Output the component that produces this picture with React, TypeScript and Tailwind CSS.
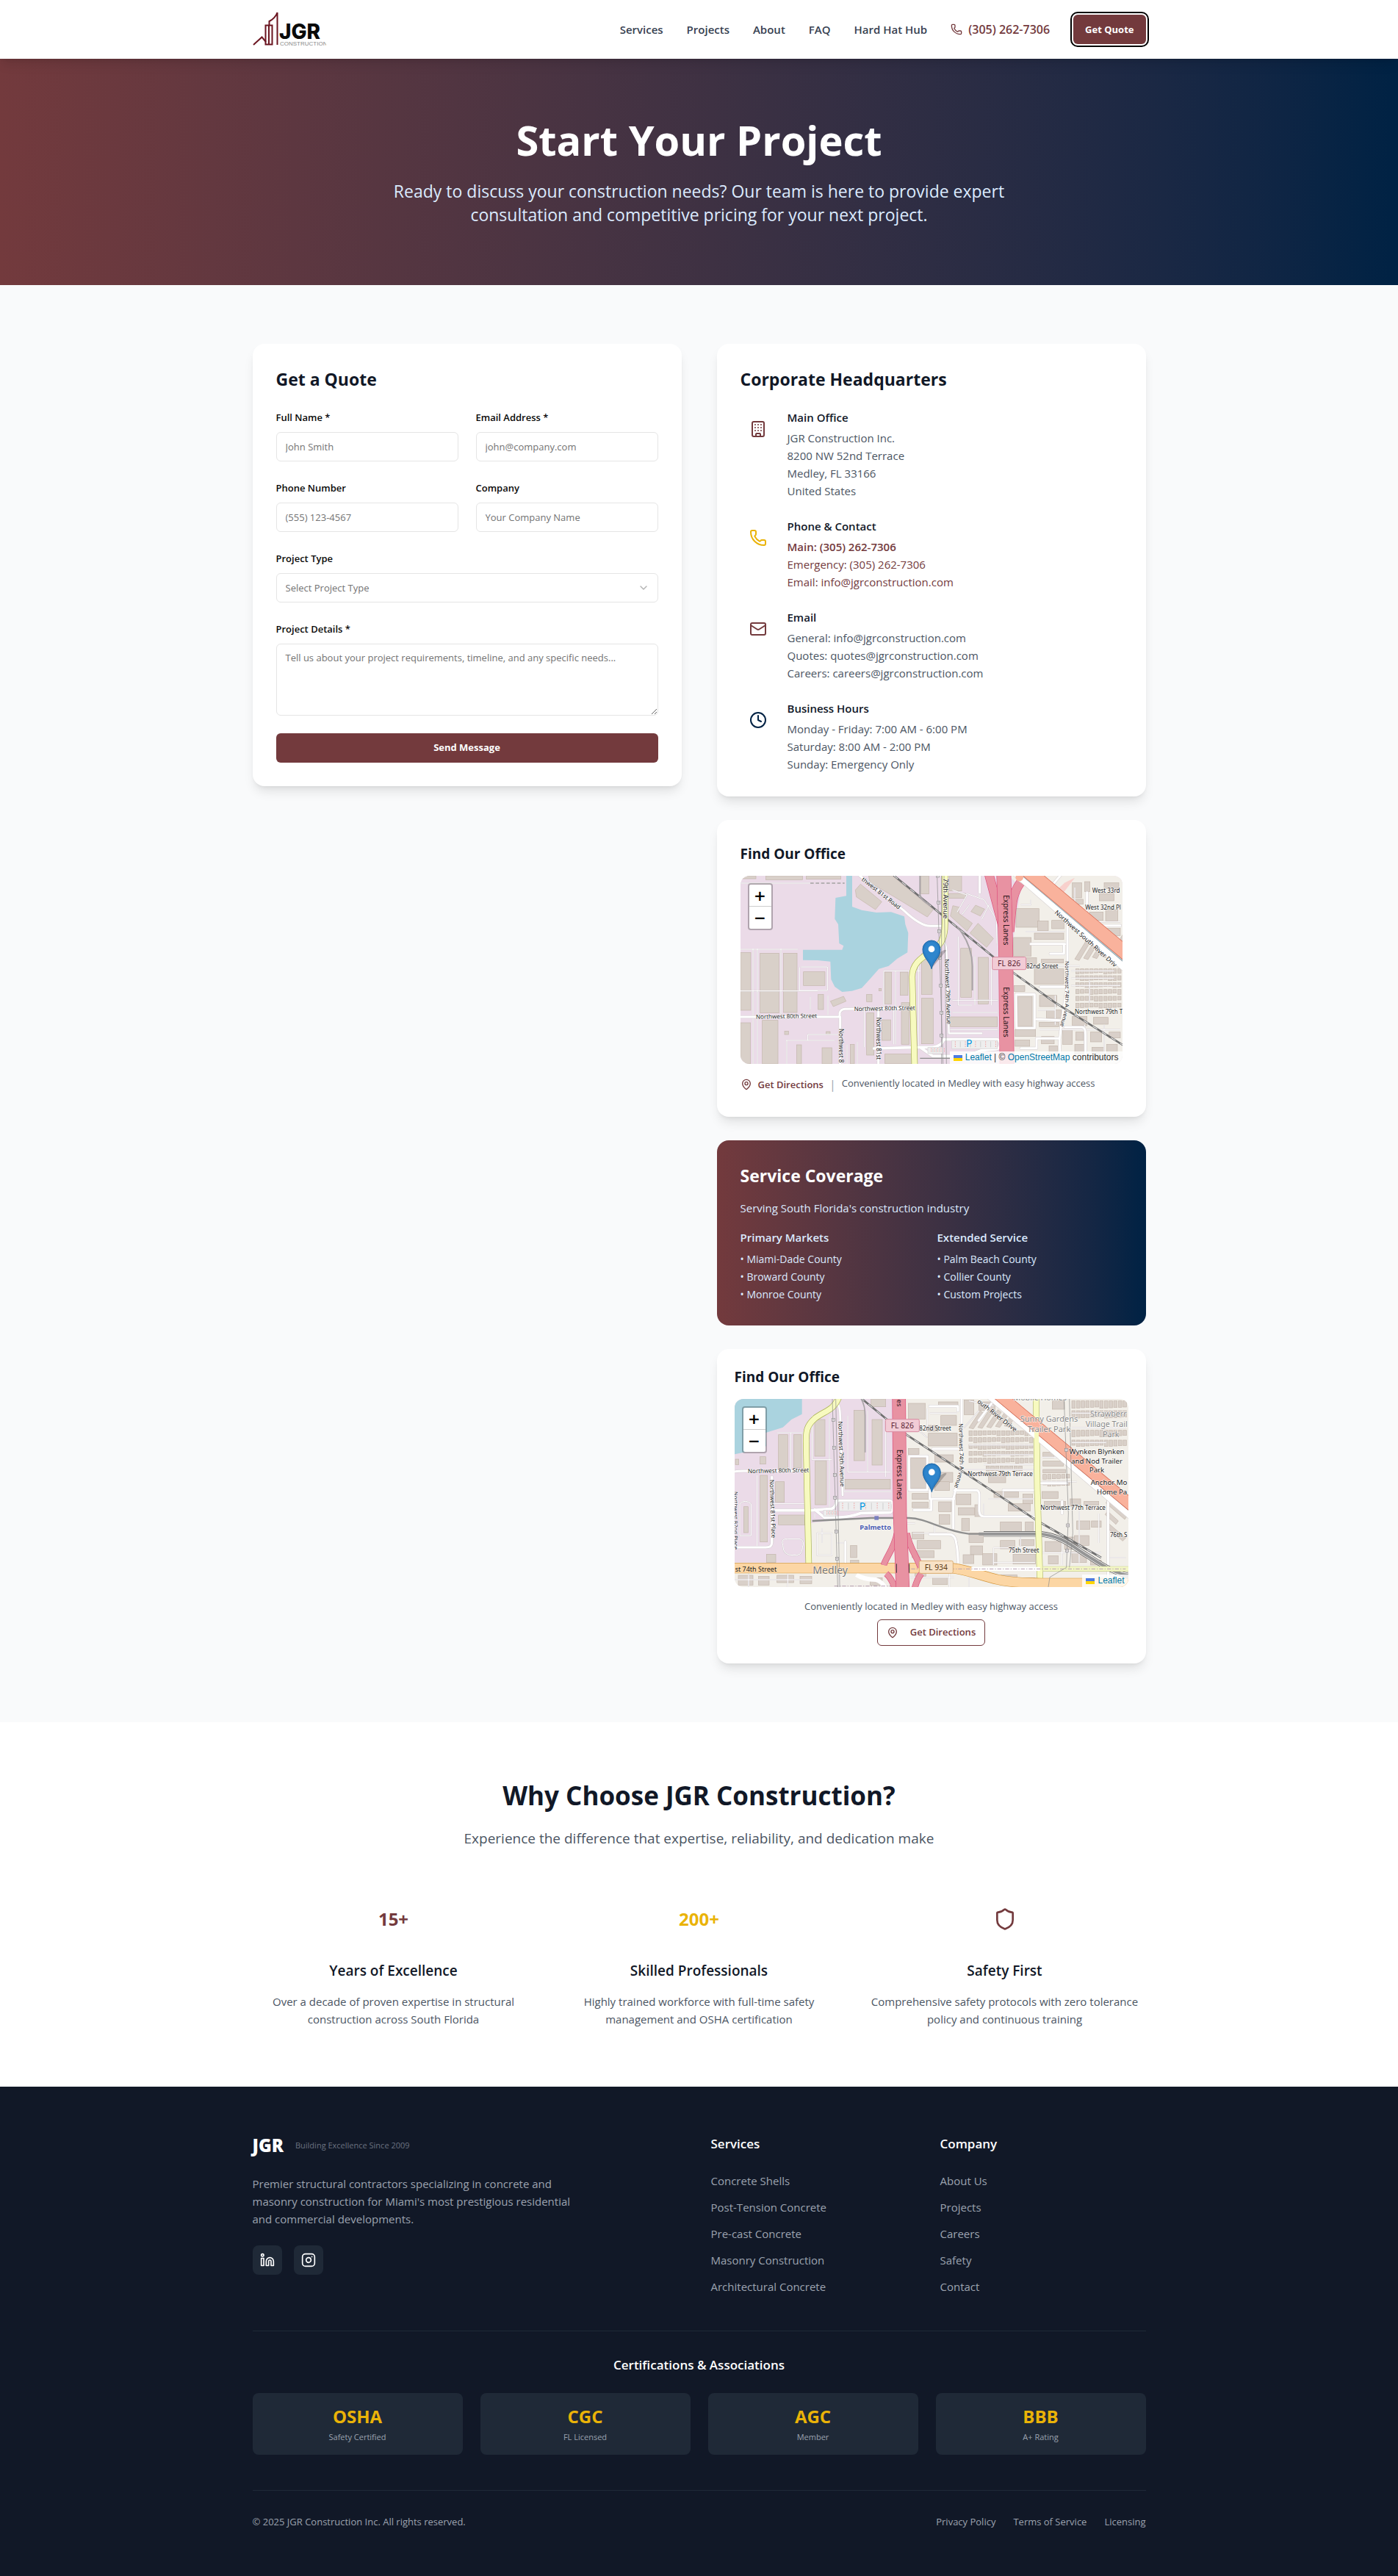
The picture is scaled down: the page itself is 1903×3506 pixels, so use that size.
import React from "react";
import {
  Building,
  ChevronDown,
  Clock,
  Instagram,
  Linkedin,
  Mail,
  MapPin,
  Phone,
  Shield,
} from "lucide-react";

type Box = [number, number, number, number];
type Label = { x: number; y: number; t: string; r?: number; s?: number; fill?: string; bold?: boolean; plain?: boolean; anchor?: "start" | "middle" };

function Boxes({ items }: { items: Box[] }) {
  return (
    <g fill="#d9d0c9" stroke="#c4b6ab" strokeWidth="2">
      {items.map(([x, y, w, h], i) => (
        <rect key={i} x={x} y={y} width={w} height={h} />
      ))}
    </g>
  );
}

function Roads({ d, w = 9 }: { d: string; w?: number }) {
  return (
    <g fill="none" strokeLinecap="round" strokeLinejoin="round">
      <path d={d} stroke="#d3cdd0" strokeWidth={w + 3} />
      <path d={d} stroke="#ffffff" strokeWidth={w} />
    </g>
  );
}

function Lanes({ d }: { d: string }) {
  return (
    <g fill="none" strokeLinejoin="round">
      <path d={d} stroke="#cfc8cc" strokeWidth="5" />
      <path d={d} stroke="#ffffff" strokeWidth="3" />
    </g>
  );
}

function Rail({ d }: { d: string }) {
  return (
    <g fill="none">
      <path d={d} stroke="#6f6f6f" strokeWidth="8" />
      <path d={d} stroke="#ffffff" strokeWidth="3" strokeDasharray="22 22" />
    </g>
  );
}

function Casing({ d, w, fill, edge }: { d: string; w: number; fill: string; edge: string }) {
  return (
    <g fill="none">
      <path d={d} stroke={edge} strokeWidth={w + 4} />
      <path d={d} stroke={fill} strokeWidth={w} />
    </g>
  );
}

function PowerLine({ d, poles }: { d: string; poles: [number, number][] }) {
  return (
    <g fill="none" stroke="#8a8a8a" strokeWidth="2">
      <path d={d} />
      {poles.map(([x, y], i) => (
        <g key={i}>
          <rect x={x - 6} y={y - 6} width="12" height="12" fill="#f4eef2" />
          <circle cx={x} cy={y} r="2" />
        </g>
      ))}
    </g>
  );
}

function Labels({ items }: { items: Label[] }) {
  return (
    <g fontFamily="'Noto Sans', sans-serif" stroke="#ffffff" strokeOpacity="0.75" strokeLinejoin="round" paintOrder="stroke">
      {items.map((l, i) => (
        <text
          key={i}
          x={l.x}
          y={l.y}
          fontSize={l.s ?? 24}
          fill={l.fill ?? "#222222"}
          strokeWidth={l.plain ? 0 : 4}
          fontWeight={l.bold ? 700 : 400}
          textAnchor={l.anchor ?? "start"}
          transform={l.r ? `rotate(${l.r} ${l.x} ${l.y})` : undefined}
        >
          {l.t}
        </text>
      ))}
    </g>
  );
}

function RoadShield({ x, y, text, fill, edge, color }: { x: number; y: number; text: string; fill: string; edge: string; color: string }) {
  return (
    <g>
      <rect x={x} y={y} width="138" height="51" rx="6" fill={fill} stroke={edge} strokeWidth="3" />
      <text x={x + 69} y={y + 37} textAnchor="middle" fontSize="31" fontFamily="'Noto Sans', sans-serif" fill={color}>
        {text}
      </text>
    </g>
  );
}

function Pin({ x, y }: { x: number; y: number }) {
  return (
    <g transform={`translate(${x} ${y})`}>
      <path d="M2 -4 L50 -62 Q70 -82 50 -76 L20 -60Z" fill="#000000" opacity="0.22" />
      <path d="M0 0 C-6 -30 -36 -46 -36 -80 A36 36 0 0 1 36 -80 C36 -46 6 -30 0 0Z" fill="#2a7fc6" stroke="#1f66a5" strokeWidth="3" />
      <path d="M0 -18 C-6 -40 -29 -54 -29 -80 A29 29 0 0 1 29 -80 C29 -54 6 -40 0 -18Z" fill="#2f86cd" />
      <circle cx="0" cy="-81" r="13" fill="#ffffff" />
    </g>
  );
}

function Parking({ x, y, w, h }: { x: number; y: number; w: number; h: number }) {
  const ticks = Array.from({ length: 9 }, (_, i) => x + 14 + (i * w) / 9);
  return (
    <g>
      <rect x={x} y={y} width={w} height={h} fill="#eeeeee" stroke="#d8d4d6" strokeWidth="2" />
      {ticks.map((tx, i) => (
        <path key={i} d={`M${tx} ${y + 4}V${y + h - 6}`} stroke={i % 2 ? "#cfcfcf" : "#f0a5a5"} strokeWidth="3" strokeDasharray={i % 2 ? "none" : "5 4"} />
      ))}
    </g>
  );
}

function Homes({ x, y, cols, rows, w = 14, h = 20, gx = 19, gy = 28 }: { x: number; y: number; cols: number; rows: number; w?: number; h?: number; gx?: number; gy?: number }) {
  const cells: Box[] = [];
  for (let r = 0; r < rows; r++) for (let c = 0; c < cols; c++) cells.push([x + c * gx, y + r * gy, w, h - ((c * 7 + r * 5) % 6)]);
  return <Boxes items={cells} />;
}

const westBoxes: Box[] = [
  [15, 325, 42, 236], [95, 328, 77, 244], [190, 328, 56, 242], [272, 404, 88, 56], [15, 612, 41, 168], [104, 602, 64, 178],
  [604, 405, 28, 130], [667, 405, 32, 95], [672, 530, 32, 170], [754, 330, 44, 166], [754, 512, 48, 186], [914, 308, 44, 200],
  [985, 345, 42, 190], [872, 588, 192, 40], [530, 572, 30, 172], [592, 600, 36, 84], [604, 740, 112, 38], [348, 714, 40, 66],
  [244, 702, 20, 78], [463, 700, 17, 80], [332, 496, 22, 62], [530, 496, 22, 30], [195, 646, 16, 14], [365, 648, 16, 14],
  [868, 12, 50, 62], [866, 84, 68, 20], [752, 12, 32, 74], [20, 12, 58, 12], [118, 12, 150, 16], [284, 12, 140, 14], [580, 472, 10, 10],
];

const eastBoxes: Box[] = [
  [1140, 146, 94, 76], [1130, 264, 72, 76], [1215, 246, 120, 26], [1228, 196, 44, 40], [1286, 194, 50, 34], [1215, 392, 120, 62],
  [1150, 346, 74, 24], [1244, 352, 90, 16], [1148, 505, 58, 122], [1132, 460, 44, 24], [1136, 640, 84, 28], [1136, 682, 60, 26],
  [1236, 500, 70, 46], [1264, 560, 60, 34], [1235, 610, 80, 18], [1244, 668, 52, 30], [1275, 706, 34, 46], [1330, 640, 40, 60],
  [1384, 650, 32, 34], [1380, 700, 44, 40], [1444, 650, 46, 40], [1450, 712, 50, 50], [1520, 650, 46, 24], [1510, 700, 44, 60],
  [1370, 40, 38, 62], [1420, 36, 22, 40], [1480, 84, 60, 30], [1440, 160, 56, 34], [1506, 150, 50, 46], [1500, 226, 66, 30],
  [1360, 108, 54, 20], [1500, 40, 60, 24], [1370, 586, 60, 38], [1456, 590, 60, 28],
];

function OfficeMapWest() {
  return (
    <svg className="block h-full w-full" viewBox="15 12 1560 768" preserveAspectRatio="xMidYMid slice" role="img" aria-label="Street map around Northwest 79th Avenue, Medley">
      <rect x="0" y="0" width="1600" height="800" fill="#ebdbe8" />
      <path d="M1100 0H1600V800H1130V640L1125 300 1160 60Z" fill="#f2efe9" />
      <path d="M1340 40l40 -20 -50 66 -30 -10z" fill="#f8d0cc" />
      <path d="M447 12H471V138L510 152 570 162 630 160 684 178 688 210 700 245 697 325 655 350 620 380 580 392 545 432 510 470 470 482 430 486 400 465 385 435 382 362 330 357 270 356V314H430L436 298 418 288 414 210 400 188 403 102 447 94Z" fill="#aad3df" />
      <Boxes items={westBoxes} />
      <g fill="#d9d0c9" stroke="#c4b6ab" strokeWidth="2">
        <path d="M484 70L505 46 592 118 566 150 488 98Z" />
        <path d="M538 12H635L802 150 778 180 640 96 544 40Z" />
        <path d="M952 246L985 206 1048 268 1020 304Z" />
        <path d="M872 176L882 134 908 140 906 165 962 206 940 238Z" />
        <path d="M956 158L975 132 1012 148 994 176Z" />
        <path d="M382 524L436 504 446 524 394 546Z" />
      </g>
      <Boxes items={eastBoxes} />
      <Homes x={1384} y={392} cols={10} rows={6} />
      <g fill="#d9d0c9" stroke="#c4b6ab" strokeWidth="2">
        {[0, 1, 2, 3, 4, 5].map((i) => (
          <path key={i} d={`M${1380 + i * 36} ${352 - i * 4}l52 -84 14 10 -48 80z`} />
        ))}
      </g>
      <Lanes d="M15 42H300M66 310V780M84 310V780M180 310V590M256 385V480H370V384H262M15 312H250M600 400H750M648 400V700M600 400V556M742 380V720M904 260V540H960M972 340V540M880 520H1066M880 570H1066M870 640H1066M1040 345V540M520 560V712M640 560V700M300 505V560M372 500V580M15 482H330M200 684H400M204 684V780M290 684V660H420M450 700V780M492 690V780M940 85L1010 110 1060 190 1062 290M880 70L940 90 900 160M990 60V100M920 170L950 130M1030 130L1000 190" />
      <Lanes d="M1225 20L1290 40 1260 90M1200 110V130H1160M1180 240H1340M1350 200H1566M1160 380H1400M1366 460H1566M1440 440V530M1236 640H1566M1366 400H1540M1366 430H1540M1420 620V780M1500 620V780M1230 560H1300M1300 500V620M1380 60V120" />
      <Roads d="M500 10L600 88 680 152 C720 190 760 217 790 217H838" />
      <Roads d="M846 282Q856 290 857 340L866 655H1000" w={7} />
      <Roads d="M15 588H420V572Q424 558 440 556L725 552M422 588V780M578 560V780" />
      <Roads d="M560 717L740 712H800Q836 708 846 680H1062Q1075 682 1075 698 1075 718 1058 720L1000 724Q940 748 880 748H800L752 715" w={11} />
      <Roads d="M1140 496H1216V634H1142ZM1225 598L1320 602M1350 130V450L1325 620 1318 680 1320 740M1200 290H1340M1336 290V330H1280M1240 466H1350M1160 716H1224V676H1316M1340 630H1410Q1424 632 1424 660V760M1430 80V150L1400 190M1490 215H1566M1280 60L1330 0M992 12V80" />
      <Rail d="M640 10L1050 345M1125 405L1300 530 1580 705" />
      <path d="M748 12V90Q752 112 790 132M900 220Q960 290 962 380V480" fill="none" stroke="#a9a4a7" strokeWidth="6" />
      <Casing d="M850 5V205C850 262 838 290 800 318 C745 350 716 375 716 425L726 785" w={22} fill="#f7fabf" edge="#a8b052" />
      <Casing d="M1028 0L1092 240M1158 40C1122 90 1124 130 1114 240" w={34} fill="#e892a2" edge="#dc4f7c" />
      <Casing d="M1090 0L1098 300 1103 790" w={56} fill="#e892a2" edge="#dc4f7c" />
      <path d="M1110 110L1099 300M1076 130L1096 300" stroke="#e892a2" strokeWidth="22" />
      <path d="M1140 0L1600 400" stroke="#d9d4d4" strokeWidth="34" />
      <path d="M1140 0L1600 400" stroke="#ffffff" strokeWidth="30" />
      <path d="M1160 0L1600 374" stroke="#8f9aa0" strokeWidth="14" />
      <path d="M1160 0L1600 372" stroke="#aad3df" strokeWidth="12" />
      <path d="M1188 -8L1610 346" stroke="#d7644c" strokeWidth="58" />
      <path d="M1188 -8L1610 346" stroke="#f9b29c" strokeWidth="54" />
      <circle cx="1154" cy="18" r="16" fill="#f9b29c" />
      <PowerLine d="M818 12L842 780M836 12V780M846 12L856 780" poles={[[820, 12], [824, 121], [826, 238], [829, 346], [833, 460], [836, 571], [836, 664]]} />
      <Parking x={878} y={684} w={186} h={34} />
      <Parking x={780} y={712} w={60} h={26} />
      <path d="M300 42H440" stroke="#b5b0b3" strokeWidth="6" strokeDasharray="14 8" />
      <path d="M748 757H870" stroke="#8c8c8c" strokeWidth="4" />
      <Labels
        items={[
          { x: 508, y: 30, t: "thwest 81st Road", r: 38 },
          { x: 844, y: 22, t: "79th Avenue", r: 90, s: 28 },
          { x: 1088, y: 90, t: "Express Lanes", r: 90, s: 31, fill: "#2a1519", plain: true },
          { x: 1088, y: 466, t: "Express Lanes", r: 90, s: 31, fill: "#2a1519", plain: true },
          { x: 849, y: 352, t: "Northwest 79th Avenue", r: 88, s: 24 },
          { x: 1342, y: 360, t: "Northwest 74th A", r: 90, s: 23 },
          { x: 1338, y: 562, t: "venue", r: 106, s: 23 },
          { x: 416, y: 636, t: "Northwest 8", r: 90 },
          { x: 570, y: 590, t: "Northwest 81st", r: 90 },
          { x: 78, y: 596, t: "Northwest 80th Street", r: -1 },
          { x: 479, y: 564, t: "Northwest 80th Street", r: -1 },
          { x: 1182, y: 390, t: "82nd Street" },
          { x: 1451, y: 82, t: "West 33rd" },
          { x: 1423, y: 151, t: "West 32nd Pl" },
          { x: 1380, y: 575, t: "Northwest 79th T" },
          { x: 1296, y: 164, t: "Northwest South River Driv", r: 42, s: 26 },
          { x: 936, y: 712, t: "P", s: 42, fill: "#0092da" },
        ]}
      />
      <RoadShield x={1043} y={344} text="FL 826" fill="#f2ccd6" edge="#d98aa0" color="#5b1f33" />
      <Pin x={795} y={392} />
    </svg>
  );
}

const plantBoxes: Box[] = [
  [182, 158, 38, 142], [244, 158, 32, 134], [330, 96, 42, 150], [332, 264, 46, 180], [490, 58, 44, 206], [564, 96, 42, 186],
  [453, 340, 186, 40], [107, 324, 30, 272], [170, 350, 36, 84], [182, 486, 108, 40], [40, 452, 18, 106], [133, 646, 38, 34],
  [106, 248, 24, 30], [6, 258, 14, 22], [560, 12, 60, 32], [476, 610, 26, 50], [476, 670, 34, 26],
];

const townBoxes: Box[] = [
  [722, 254, 62, 124], [712, 30, 70, 64], [794, 152, 118, 52], [712, 214, 44, 24], [835, 24, 80, 18], [845, 80, 64, 40],
  [790, 120, 44, 24], [820, 240, 76, 30], [830, 312, 64, 40], [728, 398, 66, 24], [728, 434, 66, 22], [820, 350, 60, 36],
  [728, 556, 48, 28], [748, 590, 96, 34], [728, 632, 90, 28], [836, 432, 52, 40], [838, 484, 44, 40], [908, 400, 60, 44],
  [916, 456, 66, 30], [930, 500, 32, 50], [984, 444, 22, 48], [960, 560, 58, 38], [966, 612, 50, 36], [1016, 644, 58, 46],
  [1088, 514, 86, 46], [1190, 514, 32, 46], [1040, 320, 70, 34], [1062, 390, 100, 24], [1180, 400, 40, 40], [1120, 440, 90, 30],
  [1088, 590, 60, 34], [1166, 586, 60, 24], [1140, 646, 92, 40], [936, 648, 44, 36], [1270, 594, 66, 40], [1284, 652, 40, 34],
  [1350, 576, 44, 50], [1400, 510, 54, 34], [1460, 510, 40, 26], [1380, 636, 60, 44], [1456, 670, 44, 20], [1258, 390, 66, 28],
  [1268, 430, 86, 18], [1372, 420, 44, 30], [1430, 430, 60, 16], [740, 702, 44, 34], [812, 740, 60, 30], [1262, 230, 44, 22],
  [1262, 266, 84, 20], [1262, 300, 92, 14], [1090, 730, 66, 40], [1180, 742, 50, 30], [1000, 24, 66, 34], [940, 16, 40, 60],
  [18, 732, 60, 40], [100, 736, 44, 36], [176, 732, 68, 30], [270, 736, 48, 30], [556, 742, 50, 30], [1300, 20, 50, 34], [1390, 570, 60, 40],
];

function OfficeMapEast() {
  return (
    <svg className="block h-full w-full" viewBox="3 12 1608 768" preserveAspectRatio="xMidYMid slice" role="img" aria-label="Street map around Palmetto Station, Medley">
      <rect x="0" y="0" width="1640" height="800" fill="#f2efe9" />
      <path d="M0 0H650V500H470L310 520V680H0Z" fill="#ebdbe8" />
      <path d="M0 0H278V74L235 96 200 128 130 150 132 205 60 226 0 238Z" fill="#aad3df" />
      <Boxes items={plantBoxes} />
      <Boxes items={townBoxes} />
      <Homes x={960} y={142} cols={14} rows={5} />
      <Homes x={1030} y={286} cols={8} rows={1} />
      <Homes x={1380} y={20} cols={12} rows={2} gy={40} h={30} />
      <Homes x={1380} y={140} cols={12} rows={2} gy={40} h={26} />
      <Homes x={1262} y={320} cols={6} rows={2} />
      <g fill="#d9d0c9" stroke="#c4b6ab" strokeWidth="2">
        {[0, 1, 2, 3, 4].map((i) => (
          <path key={i} d={`M${960 + i * 36} ${130 - i * 2}l46 -70 14 10 -42 64z`} />
        ))}
        <path d="M1526 470l44 40 -10 14 -44 -40zM1526 420l80 70 -10 14 -76 -66zM1530 520l70 60 -12 12 -62 -52z" />
      </g>
      <Lanes d="M176 150H290M232 150V310M300 150V470M390 80V460M320 80V260H400M465 80V310H640M546 60V310M620 96V330M450 300V390H644M160 330V600M95 324V620M24 440V570H70V440Q46 420 24 440M200 610Q190 580 220 584H270Q290 590 280 620 280 655 240 650 200 650 200 610M150 440H290M340 560H400V650H340ZM360 540V600M420 600H452M740 520H650M330 480V500M0 750H320M60 680V780M220 700V780M430 700V780" />
      <Lanes d="M800 40H910M800 70H910M790 130V50M730 120L790 170M960 20L1060 40M940 130L1000 60M960 200H1230M1020 240H1230M1020 280H1230M940 300H1230M1260 250H1350M1260 350H1400M1380 70H1600M1380 130H1600M1380 190H1520M1060 620H1230M1060 680H1230M1060 620V690M1250 640H1500M1340 600V690M1170 560V640M820 520V560M730 560L870 560M1020 440V490M1040 420H1230M1100 380V420M1410 470V680M1490 480V600M1526 660H1600M880 690V780M960 700V780M720 740H900" />
      <Roads d="M0 310Q10 306 40 306H290M155 330V600Q155 618 130 618H0" />
      <Roads d="M420 30Q434 40 434 80L444 405M455 595V680" w={8} />
      <Roads d="M170 467H320L400 460Q415 455 420 428H635Q650 430 650 450 650 475 632 476L520 478Q470 496 420 496H370L330 464" w={11} />
      <Roads d="M715 246H790V384H716ZM800 384V420H900M806 422V466H735M896 470V420L930 290V12M900 385H990Q1002 386 1002 404V470Q1004 492 1020 492H1230M896 470V540M800 565H880Q904 566 908 600 916 640 916 700M1100 384H1230M1250 356H1360M812 216H930M1528 430V770M800 42H915V60M1000 100L1060 20M1340 430V480" />
      <path d="M500 730Q530 750 580 750 610 760 620 790" fill="none" stroke="#ffffff" strokeWidth="18" />
      <Rail d="M515 5L630 100M700 155L960 325 1240 510 1500 660" />
      <path d="M520 12Q536 40 536 80V230" fill="none" stroke="#a9a4a7" strokeWidth="5" />
      <path d="M320 510L560 498H715C790 500 850 550 960 563 H1250C1340 570 1390 620 1440 650 S1540 720 1620 735" fill="none" stroke="#8f8f8f" strokeWidth="7" />
      <path d="M1020 563H1250C1340 570 1390 620 1440 650 S1540 720 1620 735" fill="none" stroke="#444444" strokeWidth="22" />
      <path d="M1020 563H1250C1340 570 1390 620 1440 650 S1540 720 1620 735" fill="none" stroke="#f2f0ee" strokeWidth="18" />
      <path d="M1000 563H1250C1340 570 1390 620 1440 650 S1540 720 1620 735" fill="none" stroke="#959595" strokeWidth="12" />
      <Casing d="M430 0C410 60 370 60 330 92 300 118 294 140 295 190L306 700" w={22} fill="#f7fabf" edge="#a8b052" />
      <Casing d="M1234 0L1239 380 1250 750" w={22} fill="#f7fabf" edge="#b5bb72" />
      <Casing d="M1262 706H1620" w={18} fill="#f3f7c4" edge="#c9cd92" />
      <Casing d="M0 703H890C960 710 1010 735 1080 750 1140 764 1200 762 1250 764H1620" w={38} fill="#fcd6a4" edge="#d3963c" />
      <path d="M970 706H1250" stroke="#ffffff" strokeWidth="16" />
      <path d="M410 776H690V706H1600" fill="none" stroke="#b79fb3" strokeWidth="3" strokeDasharray="16 6 4 6" />
      <Casing d="M666 560C656 620 620 660 612 690M706 560C716 620 750 660 762 700M622 725Q650 750 660 800M766 725Q745 750 735 800" w={22} fill="#e892a2" edge="#dc4f7c" />
      <Casing d="M674 0L678 480 690 800" w={52} fill="#e892a2" edge="#dc4f7c" />
      <path d="M664 685V722M716 685V722" stroke="#333333" strokeWidth="3" />
      <path d="M1020 -20L1640 506" stroke="#d9d4d4" strokeWidth="30" />
      <path d="M1020 -20L1640 506" stroke="#ffffff" strokeWidth="26" />
      <path d="M1034 -22L1640 484" stroke="#8f9aa0" strokeWidth="12" />
      <path d="M1034 -22L1640 483" stroke="#aad3df" strokeWidth="10" />
      <path d="M1064 -20L1640 460" stroke="#d7644c" strokeWidth="48" />
      <path d="M1064 -20L1640 460" stroke="#f9b29c" strokeWidth="44" />
      <path d="M1236 140V210" stroke="#f7fabf" strokeWidth="18" />
      <PowerLine d="M402 12L424 780M416 12L432 780" poles={[[406, 97], [409, 211], [412, 322], [413, 415], [418, 553], [421, 664]]} />
      <PowerLine d="M1348 12L1366 480 1358 700 1290 740 1284 780M1370 12L1384 560 1370 700" poles={[[1357, 220], [1364, 528], [1360, 631]]} />
      <Parking x={430} y={432} w={212} h={38} />
      <Parking x={366} y={466} w={50} h={24} />
      <rect x="574" y="490" width="17" height="16" fill="#7a7fbf" />
      <Labels
        items={[
          { x: 426, y: 104, t: "Northwest 79th Avenue", r: 88 },
          { x: 146, y: 342, t: "Northwest 81st Place", r: 88 },
          { x: 0, y: 390, t: "Northwest 82nd Place", r: 90, s: 23 },
          { x: 57, y: 315, t: "Northwest 80th Street", r: -1 },
          { x: 666, y: 14, t: "es", r: 90, s: 28, fill: "#2a1519", plain: true },
          { x: 665, y: 218, t: "Express Lanes", r: 90, s: 31, fill: "#2a1519", plain: true },
          { x: 757, y: 140, t: "82nd Street" },
          { x: 919, y: 112, t: "Northwest 74th A", r: 89, s: 23 },
          { x: 920, y: 310, t: "venue", r: 108, s: 23 },
          { x: 955, y: 327, t: "Northwest 79th Terrace" },
          { x: 1252, y: 466, t: "Northwest 77th Terrace" },
          { x: 1122, y: 640, t: "75th Street" },
          { x: 1536, y: 576, t: "76th S" },
          { x: 992, y: 26, t: "outh River Drive", r: 38, s: 26 },
          { x: 5, y: 716, t: "st 74th Street", s: 27, plain: true },
          { x: 322, y: 727, t: "Medley", s: 42, fill: "#777777" },
          { x: 514, y: 546, t: "Palmetto", s: 28, fill: "#4a5bb0", bold: true },
          { x: 512, y: 466, t: "P", s: 42, fill: "#0092da" },
          { x: 1250, y: 18, t: "Mobile Homes", s: 32, fill: "#888888", anchor: "middle" },
          { x: 1287, y: 104, t: "Sunny Gardens", s: 33, fill: "#888888", anchor: "middle" },
          { x: 1287, y: 146, t: "Trailer Park", s: 33, fill: "#888888", anchor: "middle" },
          { x: 1455, y: 84, t: "Strawberr", s: 32, fill: "#888888" },
          { x: 1436, y: 126, t: "Village Trail", s: 32, fill: "#888888" },
          { x: 1506, y: 168, t: "Park", s: 32, fill: "#888888" },
          { x: 1482, y: 238, t: "Wynken Blynken", s: 29, anchor: "middle" },
          { x: 1482, y: 275, t: "and Nod Trailer", s: 29, anchor: "middle" },
          { x: 1482, y: 313, t: "Park", s: 29, anchor: "middle" },
          { x: 1457, y: 364, t: "Anchor Mo", s: 29 },
          { x: 1482, y: 402, t: "Home Pa", s: 29 },
        ]}
      />
      <RoadShield x={619} y={95} text="FL 826" fill="#f2ccd6" edge="#d98aa0" color="#5b1f33" />
      <RoadShield x={757} y={673} text="FL 934" fill="#f8e2c6" edge="#dcae73" color="#5c3a14" />
      <Pin x={808} y={392} />
    </svg>
  );
}

function MapFrame({ children, credit }: { children: React.ReactNode; credit?: boolean }) {
  return (
    <div className="relative h-64 overflow-hidden rounded-xl">
      {children}
      <div className="absolute left-[10px] top-[10px] flex w-[34px] flex-col overflow-hidden rounded border-2 border-black/25 bg-white bg-clip-padding font-['DejaVu_Sans'] text-[20px] font-bold leading-[30px] text-black">
        <button type="button" aria-label="Zoom in" className="h-[30px] border-b border-[#cccccc]">
          +
        </button>
        <button type="button" aria-label="Zoom out" className="h-[30px]">
          −
        </button>
      </div>
      <div className="absolute bottom-0 right-0 flex items-center bg-white/80 px-[5px] font-['Liberation_Sans'] text-xs leading-[17px] text-[#333333]">
        <a href="#leaflet" className="flex items-center gap-1 text-[#0078a8]">
          <svg width="12" height="8" viewBox="0 0 12 8" aria-hidden="true">
            <path fill="#4c7be1" d="M0 0h12v4H0z" />
            <path fill="#ffd500" d="M0 4h12v4H0z" />
          </svg>
          Leaflet
        </a>
        {credit && (
          <span className="whitespace-pre">
            {" | © "}
            <a href="#openstreetmap" className="text-[#0078a8]">
              OpenStreetMap
            </a>
            {" contributors"}
          </span>
        )}
      </div>
    </div>
  );
}

function Logo() {
  return (
    <svg width="100" height="48" viewBox="0 0 100 48" role="img" aria-label="JGR Construction">
      <g fill="none" stroke="#6b1520" strokeWidth="2">
        <path d="M1 45L12.500 34.500 18 41" />
        <path d="M17.500 18.500H26.500V44.500H17.500ZM22 18.500V44.500" />
        <path d="M22.500 18V13C27 11 32 6 33.500 1V45" />
      </g>
      <text x="36" y="37" fontFamily="Inter, sans-serif" fontWeight="800" fontSize="28" fill="#0a0a0a">
        JGR
      </text>
      <text x="37" y="46" fontFamily="'Liberation Sans', sans-serif" fontSize="8" fill="#8a8a8a">
        CONSTRUCTION
      </text>
    </svg>
  );
}

function Header() {
  return (
    <header className="relative z-10 bg-white shadow-lg">
      <div className="mx-auto flex h-20 max-w-7xl items-center justify-between px-8">
        <a href="#home">
          <Logo />
        </a>
        <div className="flex items-center gap-8 text-[15px] font-semibold leading-6 text-[#374151]">
          <nav className="flex items-center gap-8">
            {["Services", "Projects", "About", "FAQ", "Hard Hat Hub"].map((t) => (
              <a key={t} href={"#" + t.toLowerCase().replaceAll(" ", "-")}>
                {t}
              </a>
            ))}
          </nav>
          <a href="tel:3052627306" className="flex items-center gap-2 text-base text-[#733a3d]">
            <Phone size={16} />
            (305) 262-7306
          </a>
          <button type="button" className="h-10 rounded-md bg-[#733a3d] px-4 text-[13px] font-bold text-white outline-2 outline-offset-2 outline-black">
            Get Quote
          </button>
        </div>
      </div>
    </header>
  );
}

const fieldClass = "block w-full rounded-md border border-neutral-200 bg-white px-3 py-2 text-[13px] leading-5 text-neutral-900 placeholder:text-neutral-500";

function Field({ id, label, placeholder, type = "text" }: { id: string; label: string; placeholder: string; type?: string }) {
  return (
    <div>
      <label htmlFor={id} className="mb-2 block text-[13px] font-semibold leading-6 text-neutral-950">
        {label}
      </label>
      <input id={id} type={type} placeholder={placeholder} className={fieldClass + " h-10"} />
    </div>
  );
}

function QuoteForm() {
  return (
    <section className="rounded-2xl bg-white p-8 shadow-lg">
      <h2 className="mb-6 text-[23px] font-bold leading-8 text-[#111827]">Get a Quote</h2>
      <form className="space-y-6" onSubmit={(e) => e.preventDefault()}>
        <div className="grid grid-cols-2 gap-6">
          <Field id="name" label="Full Name *" placeholder="John Smith" />
          <Field id="email" label="Email Address *" placeholder="john@company.com" type="email" />
          <Field id="phone" label="Phone Number" placeholder="(555) 123-4567" type="tel" />
          <Field id="company" label="Company" placeholder="Your Company Name" />
        </div>
        <div>
          <label htmlFor="type" className="mb-2 block text-[13px] font-semibold leading-6 text-neutral-950">
            Project Type
          </label>
          <div className="relative">
            <select id="type" defaultValue="" className="block h-10 w-full appearance-none rounded-md border border-neutral-200 bg-white px-3 text-[13px] leading-5 text-neutral-500">
              <option value="">Select Project Type</option>
              <option>Concrete Shell</option>
              <option>Masonry</option>
            </select>
            <ChevronDown size={16} className="pointer-events-none absolute right-3 top-3 opacity-30" />
          </div>
        </div>
        <div>
          <label htmlFor="details" className="mb-2 block text-[13px] font-semibold leading-6 text-neutral-950">
            Project Details *
          </label>
          <textarea id="details" rows={4} placeholder="Tell us about your project requirements, timeline, and any specific needs..." className={fieldClass} />
        </div>
        <button type="submit" className="h-10 w-full rounded-md bg-[#733a3d] text-[13px] font-bold text-white">
          Send Message
        </button>
      </form>
    </section>
  );
}

function ContactItem({ icon, title, children }: { icon: React.ReactNode; title: string; children: React.ReactNode }) {
  return (
    <div className="flex items-start gap-4">
      <div className="mt-1 flex size-12 shrink-0 items-center justify-center">{icon}</div>
      <div className="text-[15px] leading-6 text-[#4b5563]">
        <h3 className="mb-1 font-semibold text-[#111827]">{title}</h3>
        {children}
      </div>
    </div>
  );
}

function Headquarters() {
  return (
    <section className="rounded-2xl bg-white p-8 shadow-lg">
      <h2 className="mb-6 text-[23px] font-bold leading-8 text-[#111827]">Corporate Headquarters</h2>
      <div className="space-y-6">
        <ContactItem icon={<Building size={24} className="text-[#733a3d]" />} title="Main Office">
          <p>JGR Construction Inc.</p>
          <p>8200 NW 52nd Terrace</p>
          <p>Medley, FL 33166</p>
          <p>United States</p>
        </ContactItem>
        <ContactItem icon={<Phone size={24} className="text-[#eab308]" />} title="Phone & Contact">
          <div className="flex flex-col items-start text-[#733a3d]">
            <a href="tel:3052627306" className="font-semibold">
              Main: (305) 262-7306
            </a>
            <a href="tel:3052627306">Emergency: (305) 262-7306</a>
            <a href="mailto:info@jgrconstruction.com">Email: info@jgrconstruction.com</a>
          </div>
        </ContactItem>
        <ContactItem icon={<Mail size={24} className="text-[#733a3d]" />} title="Email">
          <p>General: info@jgrconstruction.com</p>
          <p>Quotes: quotes@jgrconstruction.com</p>
          <p>Careers: careers@jgrconstruction.com</p>
        </ContactItem>
        <ContactItem icon={<Clock size={24} className="text-[#002244]" />} title="Business Hours">
          <p>Monday - Friday: 7:00 AM - 6:00 PM</p>
          <p>Saturday: 8:00 AM - 2:00 PM</p>
          <p>Sunday: Emergency Only</p>
        </ContactItem>
      </div>
    </section>
  );
}

function Markets({ title, items }: { title: string; items: string[] }) {
  return (
    <div className="text-blue-100">
      <h3 className="mb-2 text-[15px] font-semibold leading-6">{title}</h3>
      <ul className="space-y-1 text-[14px] leading-5">
        {items.map((t) => (
          <li key={t}>• {t}</li>
        ))}
      </ul>
    </div>
  );
}

function Reason({ mark, title, text }: { mark: React.ReactNode; title: string; text: string }) {
  return (
    <div className="text-center">
      <div className="mx-auto mb-6 flex size-16 items-center justify-center text-[24px] font-bold">{mark}</div>
      <h3 className="mb-4 text-[19px] font-semibold leading-7 text-[#111827]">{title}</h3>
      <p className="text-[15px] leading-6 text-[#4b5563]">{text}</p>
    </div>
  );
}

function FooterLinks({ title, items }: { title: string; items: string[] }) {
  return (
    <div>
      <h3 className="mb-6 text-[17px] font-semibold leading-7 text-white">{title}</h3>
      <ul className="space-y-3 text-[15px] leading-6">
        {items.map((t) => (
          <li key={t}>
            <a href="#footer">{t}</a>
          </li>
        ))}
      </ul>
    </div>
  );
}

function Footer() {
  return (
    <footer id="footer" className="bg-[#111827] text-[#9ca3af]">
      <div className="mx-auto max-w-7xl px-8 py-16">
        <div className="mb-12 grid grid-cols-4 gap-8">
          <div className="col-span-2">
            <div className="mb-6 flex items-center gap-4">
              <span className="text-[24px] font-extrabold leading-8 text-white">JGR</span>
              <span className="text-[11px] leading-4 text-[#6b7280]">Building Excellence Since 2009</span>
            </div>
            <p className="mb-6 max-w-md text-[15px] leading-6">
              Premier structural contractors specializing in concrete and masonry construction for Miami's most prestigious residential and commercial developments.
            </p>
            <div className="flex gap-4 text-white">
              <a href="#linkedin" aria-label="LinkedIn" className="flex size-10 items-center justify-center rounded-lg bg-[#1f2937]">
                <Linkedin size={20} />
              </a>
              <a href="#instagram" aria-label="Instagram" className="flex size-10 items-center justify-center rounded-lg bg-[#1f2937]">
                <Instagram size={20} />
              </a>
            </div>
          </div>
          <FooterLinks title="Services" items={["Concrete Shells", "Post-Tension Concrete", "Pre-cast Concrete", "Masonry Construction", "Architectural Concrete"]} />
          <FooterLinks title="Company" items={["About Us", "Projects", "Careers", "Safety", "Contact"]} />
        </div>
        <div className="mb-12 border-t border-[#1f2937] pt-8">
          <h3 className="mb-6 text-center text-[17px] font-semibold leading-7 text-white">Certifications &amp; Associations</h3>
          <div className="grid grid-cols-4 gap-6 text-center">
            {[
              ["OSHA", "Safety Certified"],
              ["CGC", "FL Licensed"],
              ["AGC", "Member"],
              ["BBB", "A+ Rating"],
            ].map(([name, note]) => (
              <div key={name} className="rounded-lg bg-[#1f2937] p-4">
                <div className="mb-1 text-[24px] font-bold leading-8 text-[#eab308]">{name}</div>
                <div className="text-[11px] leading-4">{note}</div>
              </div>
            ))}
          </div>
        </div>
        <div className="flex justify-between border-t border-[#1f2937] pt-8 text-[13px] leading-5">
          <p>© 2025 JGR Construction Inc. All rights reserved.</p>
          <div className="flex gap-6">
            <a href="#privacy">Privacy Policy</a>
            <a href="#terms">Terms of Service</a>
            <a href="#licensing">Licensing</a>
          </div>
        </div>
      </div>
    </footer>
  );
}

export default function App() {
  return (
    <div className="bg-white font-['Open_Sans',sans-serif]">
      <Header />
      <main>
        <section className="bg-linear-to-r from-[#733a3d] to-[#002244] py-20 text-center">
          <h1 className="mb-6 text-[56px] font-bold leading-[60px] text-white">Start Your Project</h1>
          <p className="mx-auto max-w-4xl px-8 text-[23px] leading-8 text-blue-100">
            Ready to discuss your construction needs? Our team is here to provide expert
            <br />
            consultation and competitive pricing for your next project.
          </p>
        </section>

        <div className="bg-gray-50 py-20">
          <div className="mx-auto grid max-w-7xl grid-cols-2 items-start gap-12 px-8">
            <QuoteForm />
            <div className="space-y-8">
              <Headquarters />

              <section className="rounded-2xl bg-white p-8 shadow-lg">
                <h2 className="mb-4 text-[19px] font-bold leading-7 text-[#111827]">Find Our Office</h2>
                <MapFrame credit>
                  <OfficeMapWest />
                </MapFrame>
                <div className="mt-4 flex h-6 items-start gap-2 text-[13px] leading-5">
                  <a href="#directions" className="flex items-center gap-2 font-semibold leading-6 text-[#733a3d]">
                    <MapPin size={16} />
                    Get Directions
                  </a>
                  <span className="text-base leading-6 text-[#9ca3af]">|</span>
                  <p className="text-[#4b5563]">Conveniently located in Medley with easy highway access</p>
                </div>
              </section>

              <section className="rounded-2xl bg-linear-to-r from-[#733a3d] to-[#002244] p-8">
                <h2 className="mb-4 text-[23px] font-bold leading-8 text-white">Service Coverage</h2>
                <p className="mb-4 text-[15px] leading-6 text-blue-100">Serving South Florida's construction industry</p>
                <div className="grid grid-cols-2 gap-4">
                  <Markets title="Primary Markets" items={["Miami-Dade County", "Broward County", "Monroe County"]} />
                  <Markets title="Extended Service" items={["Palm Beach County", "Collier County", "Custom Projects"]} />
                </div>
              </section>

              <section className="rounded-2xl bg-white p-6 shadow-lg">
                <h2 className="mb-4 text-[19px] font-bold leading-7 text-[#111827]">Find Our Office</h2>
                <MapFrame>
                  <OfficeMapEast />
                </MapFrame>
                <div className="mt-4 flex flex-col items-center gap-2 text-[13px]">
                  <p className="leading-5 text-[#4b5563]">Conveniently located in Medley with easy highway access</p>
                  <a href="#directions" className="flex h-9 items-center gap-4 rounded-md border border-[#733a3d] px-3 font-semibold text-[#733a3d]">
                    <MapPin size={16} />
                    Get Directions
                  </a>
                </div>
              </section>
            </div>
          </div>
        </div>

        <section className="mx-auto max-w-7xl px-8 py-20">
          <div className="mb-16 text-center">
            <h2 className="mb-6 text-[35px] font-bold leading-10 text-[#111827]">Why Choose JGR Construction?</h2>
            <p className="text-[19px] leading-7 text-[#4b5563]">Experience the difference that expertise, reliability, and dedication make</p>
          </div>
          <div className="grid grid-cols-3 gap-8">
            <Reason mark={<span className="text-[#733a3d]">15+</span>} title="Years of Excellence" text="Over a decade of proven expertise in structural construction across South Florida" />
            <Reason mark={<span className="text-[#eab308]">200+</span>} title="Skilled Professionals" text="Highly trained workforce with full-time safety management and OSHA certification" />
            <Reason mark={<Shield size={32} className="text-[#733a3d]" />} title="Safety First" text="Comprehensive safety protocols with zero tolerance policy and continuous training" />
          </div>
        </section>
      </main>
      <Footer />
    </div>
  );
}
